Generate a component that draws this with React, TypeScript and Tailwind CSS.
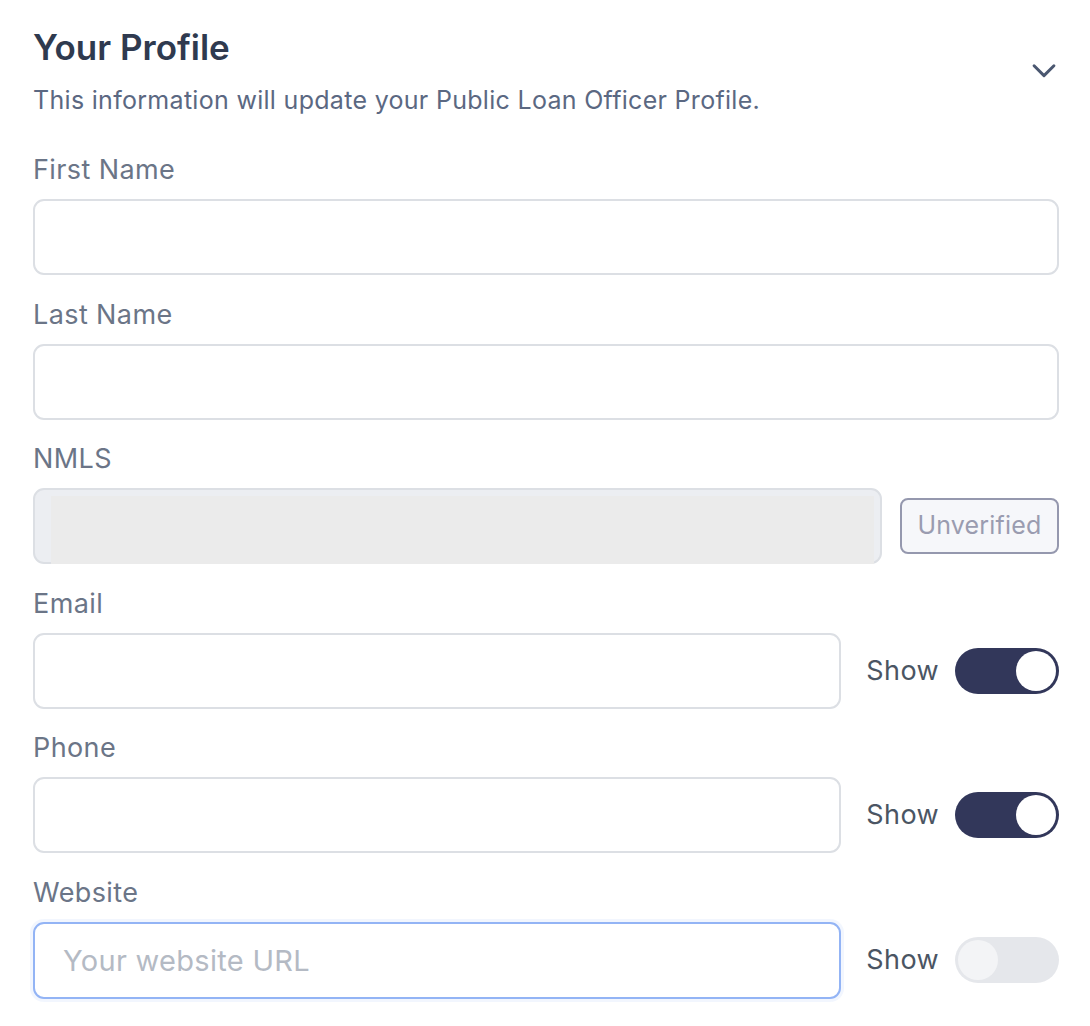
import React, { useState } from 'react';

function Toggle({ on }: { on: boolean }) {
  return (
    <div
      className={
        on
          ? 'flex h-[46px] w-[104px] items-center justify-end rounded-full bg-[#32375a] px-[3px]'
          : 'flex h-[46px] w-[104px] items-center justify-start rounded-full bg-[#e5e7eb] px-[3px]'
      }
    >
      <div className={on ? 'h-[40px] w-[40px] rounded-full bg-white' : 'h-[40px] w-[40px] rounded-full bg-[#f3f4f6]'}></div>
    </div>
  );
}

function Field({ label, children }: { label: string; children: React.ReactNode }) {
  return (
    <div className="flex flex-col">
      <label className="mb-[13px] text-[27px] leading-[32px] tracking-[0.4px] text-[#6b7587]">{label}</label>
      {children}
    </div>
  );
}

const inputCls =
  'h-[76px] w-full rounded-[11px] border-2 border-[#dcdfe4] bg-white px-[28px] text-[28px] text-[#374151] outline-none';

function ShowLabel() {
  return <span className="ml-[25px] mr-[16px] text-[27px] tracking-[0.4px] text-[#4b5563]">Show</span>;
}

export default function App() {
  const [website, setWebsite] = useState('');

  return (
    <div className="min-h-[1026px] bg-white pl-[33px] pr-[31px] pt-[25px]" style={{ fontFamily: 'Inter, "Noto Sans", sans-serif' }}>
      {/* header */}
      <div className="flex items-start justify-between">
        <div>
          <h1 className="text-[35px] leading-[44px] font-semibold text-[#2f3a4f]">Your Profile</h1>
          <p className="mt-[16px] text-[25px] leading-[30px] tracking-[0.3px] text-[#5b6882]">This information will update your Public Loan Officer Profile.</p>
        </div>
        <svg className="mt-[28px] -mr-[2px]" width="34" height="34" viewBox="0 0 24 24" fill="none" stroke="#4a5770" strokeWidth="2.1" strokeLinecap="round" strokeLinejoin="round">
          <path d="M5 9l7 7 7-7" />
        </svg>
      </div>

      <div className="mt-[39px] flex flex-col gap-[23.6px]">
        <Field label="First Name">
          <input className={inputCls} />
        </Field>

        <Field label="Last Name">
          <input className={inputCls} />
        </Field>

        <Field label="NMLS">
          <div className="flex items-center gap-[18px]">
            <div className="relative h-[76px] flex-1 rounded-[11px] border-2 border-[#dcdfe4] bg-[#eceef2]">
              {/* redacted value */}
              <div className="absolute left-[16px] right-[6px] top-[6px] -bottom-[2px] bg-[#ebebeb]"></div>
            </div>
            <div className="flex h-[56px] w-[159px] items-center justify-center rounded-[8px] border-2 border-[#9598ae] bg-[#f6f7fa] text-[25px] tracking-[0.2px] text-[#9a9cb0]">
              Unverified
            </div>
          </div>
        </Field>

        <Field label="Email">
          <div className="flex items-center">
            <input className={inputCls + ' flex-1'} />
            <ShowLabel />
            <Toggle on={true} />
          </div>
        </Field>

        <Field label="Phone">
          <div className="flex items-center">
            <input className={inputCls + ' flex-1'} />
            <ShowLabel />
            <Toggle on={true} />
          </div>
        </Field>

        <Field label="Website">
          <div className="flex items-center">
            <input
              autoFocus
              value={website}
              onChange={(e) => setWebsite(e.target.value)}
              placeholder="Your website URL"
              className="h-[77px] flex-1 rounded-[11px] border-2 border-[#93b4f5] bg-white px-[28px] text-[29px] tracking-[0.3px] text-[#374151] caret-[#4b5563] outline-none shadow-[0_0_0_3px_rgba(147,180,245,0.12)] placeholder:text-[#b4bac4]"
            />
            <ShowLabel />
            <Toggle on={false} />
          </div>
        </Field>
      </div>
    </div>
  );
}
